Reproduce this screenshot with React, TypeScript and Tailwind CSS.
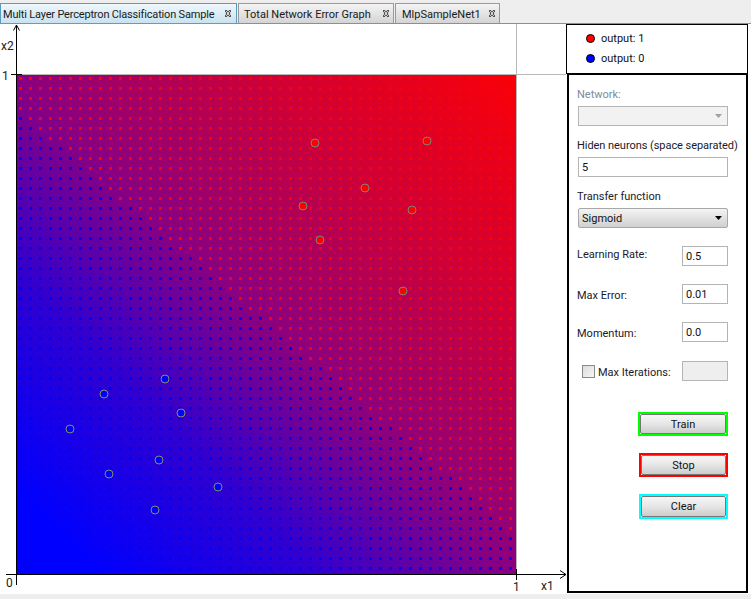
import React from "react";

const FIRST_RED = [0,0,0,0,1,2,3,5,6,7,8,9,10,12,13,14,15,16,18,19,20,21,22,23,25,26,27,28,29,31,32,33,34,35,36,38,39,40,41,42,44,45,46,47,48,49,50,50,50,50];
const RED_POINTS = [[315,143],[427,141],[365,188],[303,206],[412,210],[320,240],[403,291]];
const BLUE_POINTS = [[165,379],[104,394],[181,413],[70,429],[159,460],[109,474],[218,487],[155,510]];

function CloseIcon() {
  const cells = [[0,0],[1,0],[4,0],[5,0],[0,1],[2,1],[3,1],[5,1],[1,2],[4,2],[1,3],[4,3],[0,4],[2,4],[3,4],[5,4],[0,5],[1,5],[4,5],[5,5]];
  return (
    <svg width="8" height="7" viewBox="0 0 7 6" className="shrink-0" shapeRendering="crispEdges">
      <rect width="6" height="6" x="0.5" fill="#d0d0d0" />
      {cells.map(([x, y]) => (
        <rect key={`${x}-${y}`} x={x + 0.5} y={y} width="1" height="1" fill="#555555" />
      ))}
    </svg>
  );
}

function Tab({ label, width, gap, active }: { label: string; width: string; gap: string; active?: boolean }) {
  return (
    <div
      className={`${width} ${gap} ${
        active
          ? "border-[#5b9bc0] bg-gradient-to-b from-[#eef7fc] to-[#c9e2f0]"
          : "border-[#9a9a9a] bg-gradient-to-b from-[#f4f4f4] to-[#d4d4d4]"
      } h-[20px] border-t border-l border-r flex items-center justify-between shrink-0`}
    >
      <span className={`text-[#1a1a1a] whitespace-nowrap pt-[1px] ${active ? "tracking-[-0.18px]" : ""}`}>{label}</span>
      <CloseIcon />
    </div>
  );
}

function Plot() {
  const dots: React.ReactNode[] = [];
  FIRST_RED.forEach((first, j) => {
    for (let i = 0; i < 50; i++) {
      dots.push(
        <rect key={`${i}-${j}`} x={19 + i * 10} y={77 + j * 10} width="3" height="3" fill={i >= first ? "#ff0000" : "#0000ff"} />
      );
    }
  });
  return (
    <svg width="566" height="570" viewBox="0 24 566 570" className="block shrink-0" fontFamily="Roboto, sans-serif" fontSize="12">
      <defs>
        <linearGradient id="surface" gradientUnits="userSpaceOnUse" x1="17" y1="574" x2="516" y2="75">
          <stop offset="0.08" stopColor="#0000ff" />
          <stop offset="0.3" stopColor="#3000d0" />
          <stop offset="0.5" stopColor="#8a0080" />
          <stop offset="0.75" stopColor="#d00035" />
          <stop offset="1" stopColor="#fa0008" />
        </linearGradient>
      </defs>
      <rect x="17" y="75" width="499" height="499" fill="url(#surface)" />
      <g shapeRendering="crispEdges">
        {dots}
        <rect x="17" y="74" width="549" height="1" fill="#b8b8b8" />
        <rect x="516" y="24" width="1" height="550" fill="#b8b8b8" />
        <rect x="16" y="25" width="1" height="560" fill="#000000" />
        <rect x="6" y="574" width="560" height="1" fill="#000000" />
        <rect x="11" y="74" width="11" height="1" fill="#000000" />
        <rect x="516" y="569" width="1" height="11" fill="#000000" />
      </g>
      <path d="M13.5 30.5 L16.5 25 L19.5 30.5" fill="none" stroke="#000" strokeWidth="1" />
      <path d="M560 570.5 L566 574.5 L560 578.5" fill="none" stroke="#000" strokeWidth="1" />
      {RED_POINTS.map(([x, y]) => (
        <circle key={`r${x}`} cx={x} cy={y} r="4" fill="#ff0000" stroke="#7c8678" strokeWidth="1" />
      ))}
      {BLUE_POINTS.map(([x, y]) => (
        <circle key={`b${x}`} cx={x} cy={y} r="4" fill="#0000ff" stroke="#84906c" strokeWidth="1" />
      ))}
      <text x="1" y="50" fill="#222">x2</text>
      <text x="2" y="80" fill="#222">1</text>
      <text x="6" y="587" fill="#222">0</text>
      <text x="513" y="591" fill="#222">1</text>
      <text x="541" y="590" fill="#222">x1</text>
    </svg>
  );
}

function Field({ value, disabled, className }: { value?: string; disabled?: boolean; className: string }) {
  return (
    <div
      className={`${className} h-[20px] border border-[#b4b4b4] flex items-center px-[3px] pt-[1px] text-[#111111] shrink-0 ${
        disabled ? "bg-[#eeeeee]" : "bg-white"
      }`}
    >
      {value}
    </div>
  );
}

function ParamRow({ label, value, className, labelClass }: { label: string; value: string; className: string; labelClass?: string }) {
  return (
    <div className={`${className} flex items-center justify-between w-[151px]`}>
      <span className={`text-[#1a1a2a] ${labelClass ?? ""}`}>{label}</span>
      <Field value={value} className="w-[46px]" />
    </div>
  );
}

function ActionButton({ label, frame, className }: { label: string; frame: string; className: string }) {
  return (
    <div className={`${className} ${frame} border-2 shrink-0`}>
      <div className="h-full border border-[#777777] rounded-[2px] bg-gradient-to-b from-[#f6f6f6] via-[#e6e6e6] to-[#cccccc] flex items-center justify-center text-[#111111]">
        {label}
      </div>
    </div>
  );
}

export default function App() {
  return (
    <div className="w-[751px] h-[599px] bg-[#eeeeee] overflow-hidden flex flex-col text-[11px] leading-none" style={{ fontFamily: "Roboto, sans-serif" }}>
      <div className="h-[24px] shrink-0 border-b border-[#8f8f8f] flex items-end pt-[4px]">
        <Tab label="Multi Layer Perceptron Classification Sample" width="w-[237px]" gap="pl-[2px] pr-[4px]" active />
        <Tab label="Total Network Error Graph" width="w-[156px] ml-[1px]" gap="pl-[5px] pr-[3px]" />
        <Tab label="MlpSampleNet1" width="w-[105px] ml-[1px]" gap="pl-[6px] pr-[3px]" />
      </div>

      <div className="h-[570px] shrink-0 flex bg-white">
        <Plot />
        <div className="w-[182px] shrink-0 flex flex-col h-[569px]">
          <div className="h-[50px] shrink-0 border border-black pl-[19px] pt-[8px] flex flex-col gap-[10px]">
            <div className="flex items-center gap-[6px] h-[10px]">
              <span className="w-[9px] h-[9px] rounded-full bg-[#ff0000] border border-black" />
              <span className="text-[#111111]">output: 1</span>
            </div>
            <div className="flex items-center gap-[6px] h-[10px]">
              <span className="w-[9px] h-[9px] rounded-full bg-[#0000ff] border border-black" />
              <span className="text-[#111111]">output: 0</span>
            </div>
          </div>

          <div className="flex-1 ml-[1px] border-2 border-black -mt-[1px] pl-[9px] flex flex-col">
            <span className="mt-[13px] -ml-[1px] h-[11px] pt-[2px] flex items-center text-[#7c8ba0]">Network:</span>
            <div className="mt-[7px] w-[150px] h-[20px] border border-[#b4b4b4] bg-[#f2f2f2] flex items-center justify-end pr-[5px] shrink-0">
              <svg width="7" height="4" viewBox="0 0 7 4"><path d="M0 0H7L3.5 4Z" fill="#a0a0a0" /></svg>
            </div>
            <span className="mt-[13px] -ml-[1px] h-[11px] pt-[2px] flex items-center text-[#1a1a2a] whitespace-nowrap tracking-[-0.05px]">Hiden neurons (space separated)</span>
            <Field value="5" className="mt-[7px] w-[150px]" />
            <span className="mt-[13px] -ml-[1px] h-[11px] pt-[2px] flex items-center text-[#1a1a2a]">Transfer function</span>
            <div className="mt-[7px] w-[150px] h-[20px] border border-[#a8a8a8] rounded-[2px] bg-gradient-to-b from-[#f4f4f4] to-[#d0d0d0] flex items-center justify-between pl-[3px] pr-[5px] text-[#111111] shrink-0">
              Sigmoid
              <svg width="7" height="4" viewBox="0 0 7 4"><path d="M0 0H7L3.5 4Z" fill="#000" /></svg>
            </div>
            <ParamRow label="Learning Rate:" value="0.5" className="mt-[18px] -ml-[1px] h-[20px]" labelClass="mb-[4px]" />
            <ParamRow label="Max Error:" value="0.01" className="mt-[18px] -ml-[1px] h-[20px]" labelClass="mt-[2px]" />
            <ParamRow label="Momentum:" value="0.0" className="mt-[18px] -ml-[1px] h-[20px]" labelClass="mt-[2px]" />
            <div className="mt-[19px] h-[20px] w-[150px] flex items-center pl-[4px]">
              <span className="w-[13px] h-[13px] border border-[#8a8a8a] bg-gradient-to-br from-[#dcdcdc] to-[#f6f6f6] shrink-0" />
              <span className="ml-[3px] mt-[2px] text-[#1a1a2a] whitespace-nowrap">Max Iterations:</span>
              <Field disabled className="ml-auto w-[46px]" />
            </div>
            <ActionButton label="Train" frame="border-[#00ff00]" className="mt-[31px] ml-[60px] w-[90px] h-[24px]" />
            <ActionButton label="Stop" frame="border-[#ff0000]" className="mt-[17px] ml-[61px] w-[89px] h-[24px]" />
            <ActionButton label="Clear" frame="border-[#00ffff]" className="mt-[17px] ml-[61px] w-[89px] h-[25px]" />
          </div>
        </div>
      </div>
    </div>
  );
}
